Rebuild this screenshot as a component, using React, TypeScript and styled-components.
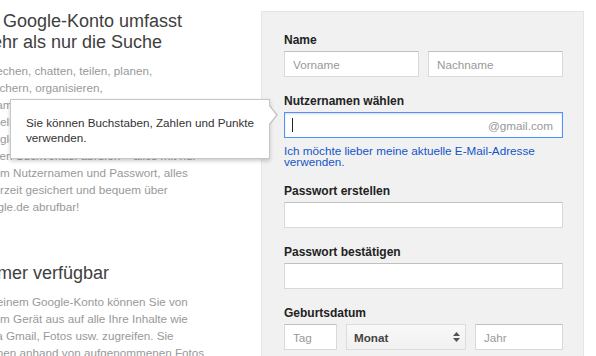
import styled, { createGlobalStyle } from "styled-components";

const GlobalStyle = createGlobalStyle`
  html, body {
    margin: 0;
    padding: 0;
    background: #fff;
    overflow: hidden;
  }
  body {
    font-family: "Liberation Sans", Arial, sans-serif;
  }
`;

const Page = styled.div`
  position: relative;
  display: flex;
  align-items: flex-start;
  width: 596px;
  height: 356px;
  padding-top: 11px;
  box-sizing: border-box;
  overflow: hidden;
`;

const Intro = styled.div`
  flex: 0 0 283px;
  margin-left: -22px;
  white-space: nowrap;
`;

const Heading = styled.h2<{ $spaced?: boolean }>`
  margin: ${({ $spaced }) => ($spaced ? "48px" : "0")} 0 0 -1px;
  font-size: 18px;
  font-weight: normal;
  line-height: 21px;
  color: #404040;
`;

const Paragraph = styled.p`
  margin: 9px 0 0;
  font-size: 11.7px;
  line-height: 17px;
  color: #999;
`;

const Panel = styled.div`
  flex: 0 0 323px;
  box-sizing: border-box;
  background: #f1f1f1;
  border: 1px solid #e5e5e5;
  padding: 20px 20px 40px 22px;
`;

const Field = styled.div`
  margin-bottom: 16px;
`;

const Label = styled.label`
  display: block;
  margin-bottom: 3px;
  font-size: 12px;
  font-weight: bold;
  line-height: 16px;
  color: #222;
`;

const Row = styled.div<{ $cols: string }>`
  display: grid;
  grid-template-columns: ${({ $cols }) => $cols};
  gap: 9px;
`;

const TextInput = styled.input`
  display: block;
  width: 100%;
  min-width: 0;
  height: 26px;
  box-sizing: border-box;
  margin: 0;
  padding: 0 8px;
  border: 1px solid #d9d9d9;
  border-top-color: #c0c0c0;
  border-radius: 0;
  background: #fff;
  font-family: inherit;
  font-size: 11.7px;
  color: #333;
  outline: none;

  &::placeholder {
    color: #999;
  }
`;

const FocusedInput = styled.div`
  display: flex;
  align-items: center;
  height: 26px;
  box-sizing: border-box;
  padding: 0 9px 0 7px;
  border: 1px solid #4d90fe;
  background: #fff;
  box-shadow: inset 0 1px 2px rgba(0, 0, 0, 0.15);
`;

const Caret = styled.span`
  width: 1px;
  height: 14px;
  background: #222;
`;

const Suffix = styled.span`
  margin-left: auto;
  font-size: 11.7px;
  color: #999;
`;

const SwitchLink = styled.a`
  display: block;
  margin: 7px 0 16px;
  font-size: 11.7px;
  line-height: 11px;
  color: #15c;
  text-decoration: none;
`;

const Select = styled.div`
  display: flex;
  align-items: center;
  justify-content: space-between;
  height: 26px;
  box-sizing: border-box;
  padding: 0 5px 0 7px;
  border: 1px solid #dcdcdc;
  background: linear-gradient(#f8f8f8, #f1f1f1);
  font-size: 11.7px;
  font-weight: bold;
  color: #444;
`;

const Tooltip = styled.div`
  position: absolute;
  left: 10px;
  top: 99px;
  width: 260px;
  box-sizing: border-box;
  padding: 15px 10px 13px 15px;
  background: #fff;
  border: 1px solid #c6c6c6;
  box-shadow: 0 2px 4px rgba(0, 0, 0, 0.2);
  font-size: 11.7px;
  line-height: 15px;
  color: #333;

  &::before,
  &::after {
    content: "";
    position: absolute;
    width: 0;
    height: 0;
    border-style: solid;
    border-color: transparent;
  }

  &::before {
    right: -9px;
    top: 5px;
    border-width: 10px 0 10px 8px;
    border-left-color: #c6c6c6;
  }

  &::after {
    right: -7px;
    top: 6px;
    border-width: 9px 0 9px 7px;
    border-left-color: #fff;
  }
`;

const SelectArrows = () => (
  <svg width="7" height="10" viewBox="0 0 7 10">
    <path d="M3.5 0 L7 4 H0 Z" fill="#555" />
    <path d="M0 6 H7 L3.5 10 Z" fill="#555" />
  </svg>
);

export default function App() {
  return (
    <>
      <GlobalStyle />
      <Page>
        <Intro>
          <Heading>
            Ihr Google-Konto umfasst
            <br />
            mehr als nur die Suche
          </Heading>
          <Paragraph>
            Sprechen, chatten, teilen, planen,
            <br />
            speichern, organisieren,
            <br />
            zusammen arbeiten, Termine verwalten,
            <br />
            aktuelle Nachrichten lesen, Videos ansehen,
            <br />
            Google Maps nutzen, Fotos bearbeiten,
            <br />
            seinen Suchverlauf abrufen – alles mit nur
            <br />
            einem Nutzernamen und Passwort, alles
            <br />
            jederzeit gesichert und bequem über
            <br />
            google.de abrufbar!
          </Paragraph>
          <Heading $spaced>Immer verfügbar</Heading>
          <Paragraph>
            Mit einem Google-Konto können Sie von
            <br />
            jedem Gerät aus auf alle Ihre Inhalte wie
            <br />
            etwa Gmail, Fotos usw. zugreifen. Sie
            <br />
            können anhand von aufgenommenen Fotos
          </Paragraph>
        </Intro>

        <Panel>
          <Field>
            <Label>Name</Label>
            <Row $cols="1fr 1fr">
              <TextInput placeholder="Vorname" readOnly />
              <TextInput placeholder="Nachname" readOnly />
            </Row>
          </Field>

          <Label>Nutzernamen wählen</Label>
          <FocusedInput>
            <Caret />
            <Suffix>@gmail.com</Suffix>
          </FocusedInput>
          <SwitchLink href="#">
            Ich möchte lieber meine aktuelle E-Mail-Adresse verwenden.
          </SwitchLink>

          <Field>
            <Label>Passwort erstellen</Label>
            <TextInput type="password" readOnly />
          </Field>

          <Field>
            <Label>Passwort bestätigen</Label>
            <TextInput type="password" readOnly />
          </Field>

          <Field>
            <Label>Geburtsdatum</Label>
            <Row $cols="53px 120px 1fr">
              <TextInput placeholder="Tag" readOnly />
              <Select>
                Monat
                <SelectArrows />
              </Select>
              <TextInput placeholder="Jahr" readOnly />
            </Row>
          </Field>
        </Panel>

        <Tooltip>Sie können Buchstaben, Zahlen und Punkte verwenden.</Tooltip>
      </Page>
    </>
  );
}
